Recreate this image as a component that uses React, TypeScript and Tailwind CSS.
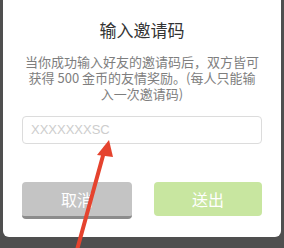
import React from 'react';

const App: React.FC = () => {
  return (
    <div
      className="relative w-[284px] h-[248px] bg-[#4f4f4f] overflow-hidden"
      style={{ fontFamily: '"Noto Sans CJK SC", "Noto Sans", sans-serif' }}
    >
      {/* Dialog */}
      <div className="mx-[3px] h-[237px] bg-white rounded-b-[6px] px-[19px] pt-[19px] flex flex-col">
        <h2 className="text-center text-[17px] leading-[22px] text-[#333333]">输入邀请码</h2>
        <div className="mt-[13px] flex flex-col items-center text-[13px] leading-[16px] text-[#7e7e7e] whitespace-nowrap">
          <div className="h-[16px]">当你成功输入好友的邀请码后，双方皆可</div>
          <div className="h-[16px]">获得 500 金币的友情奖励。(每人只能输</div>
          <div className="h-[16px]">入一次邀请码)</div>
        </div>
        <div className="mt-[14px] h-[28px] border border-[#dcdcdc] rounded-[4px] flex items-center px-[8px]">
          <span className="text-[13px] text-[#cdcdcd]" style={{ fontFamily: '"Liberation Sans", sans-serif' }}>
            XXXXXXXSC
          </span>
        </div>
        <div className="mt-[38px] flex justify-between">
          <button className="w-[110px] h-[37px] rounded-[4px] bg-[#c4c4c4] border-b-[3px] border-[#8c8c8c] text-white text-[16px] flex items-center justify-center">
            取消
          </button>
          <button className="w-[108px] h-[34px] rounded-[4px] bg-[#c8e6a0] text-white text-[16px] flex items-center justify-center">
            送出
          </button>
        </div>
      </div>

      {/* Red annotation arrow */}
      <svg className="absolute left-0 top-0 pointer-events-none" width="284" height="248" viewBox="0 0 284 248">
        <line x1="77" y1="250" x2="104" y2="152" stroke="#e5432e" strokeWidth="4" strokeLinecap="round" />
        <polygon points="109,140 97,155 113,157" fill="#e5432e" />
      </svg>
    </div>
  );
};

export default App;
